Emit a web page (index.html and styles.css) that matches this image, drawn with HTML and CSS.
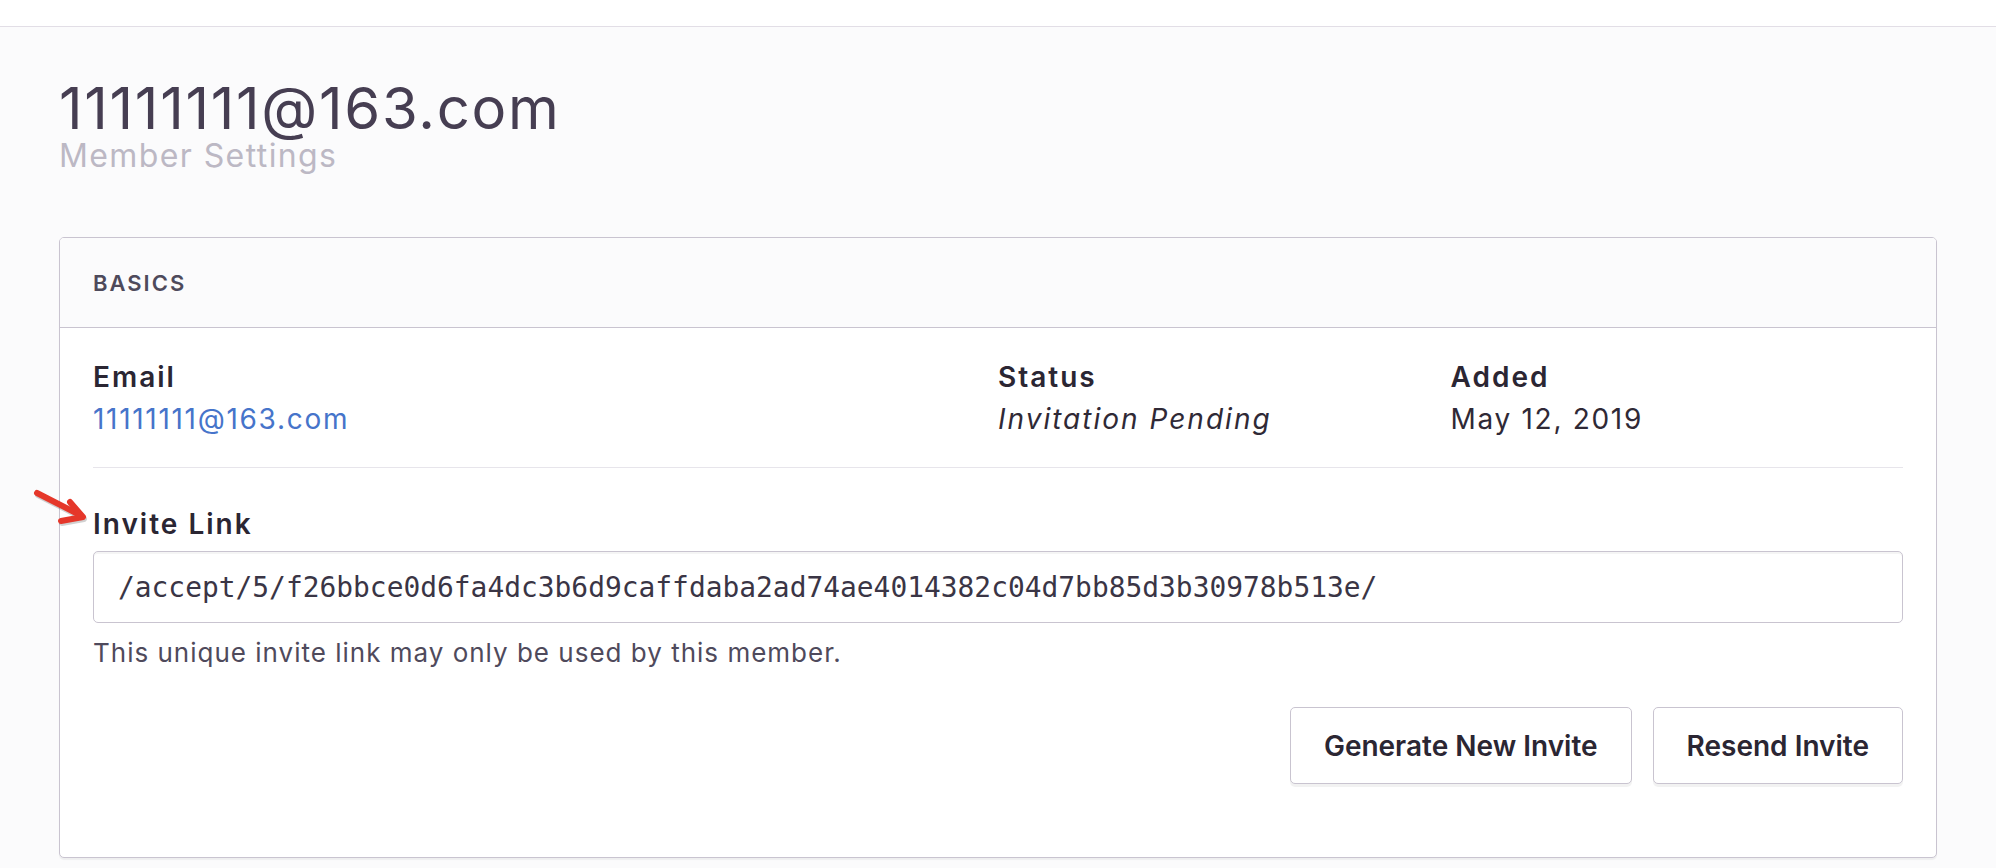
FILE: index.html
```html
<!DOCTYPE html>
<html lang="en">
<head>
<meta charset="utf-8">
<title>Member Settings</title>
<link rel="stylesheet" href="styles.css">
</head>
<body>
<div class="topbar"></div>
<main class="page">
  <div class="page-head">
    <h1 class="title">11111111@163.com</h1>
    <div class="subtitle">Member Settings</div>
  </div>
  <section class="panel">
    <div class="panel-header">BASICS</div>
    <div class="panel-body">
      <div class="info-grid">
        <div class="info">
          <div class="label">Email</div>
          <a class="value link" href="#">11111111@163.com</a>
        </div>
        <div class="info">
          <div class="label">Status</div>
          <div class="value italic">Invitation Pending</div>
        </div>
        <div class="info">
          <div class="label">Added</div>
          <div class="value">May 12, 2019</div>
        </div>
      </div>
      <div class="divider"></div>
      <div class="invite">
        <div class="label invite-label">Invite Link</div>
        <div class="link-box">/accept/5/f26bbce0d6fa4dc3b6d9caffdaba2ad74ae4014382c04d7bb85d3b30978b513e/</div>
        <div class="help">This unique invite link may only be used by this member.</div>
        <div class="actions">
          <button class="btn" type="button">Generate New Invite</button>
          <button class="btn" type="button">Resend Invite</button>
        </div>
      </div>
    </div>
  </section>
  <svg class="annot-arrow" width="70" height="50" viewBox="20 480 70 50" aria-hidden="true">
    <g fill="none" stroke="rgba(0,0,0,0.18)" stroke-width="6" stroke-linecap="round" stroke-linejoin="round" transform="translate(1,2)">
      <line x1="37" y1="494" x2="80" y2="516"/>
      <polyline points="70,503 83,518 61,522"/>
    </g>
    <g fill="none" stroke="#e5372a" stroke-width="6" stroke-linecap="round" stroke-linejoin="round">
      <line x1="37" y1="494" x2="80" y2="516"/>
      <polyline points="70,503 83,518 61,522"/>
    </g>
  </svg>
</main>
</body>
</html>
```
FILE: styles.css
```css
* { box-sizing: border-box; }
html, body { margin: 0; padding: 0; }
body {
  background: #fbfbfc;
  font-family: Inter, "Noto Sans", sans-serif;
  color: #2f2936;
  width: 1996px;
  height: 868px;
  overflow: hidden;
}
.topbar {
  height: 27px;
  background: #ffffff;
  border-bottom: 1px solid #e2dee6;
}
.page {
  position: relative;
  padding: 0 59px;
}
.page-head {
  padding-top: 52px;
}
.title {
  margin: 0;
  font-size: 58px;
  line-height: 58px;
  font-weight: 400;
  letter-spacing: 1.7px;
  color: #463e52;
}
.subtitle {
  margin-top: 3px;
  font-size: 32px;
  line-height: 32px;
  letter-spacing: 1.4px;
  color: #bcb8c4;
}
.panel {
  margin-top: 65px;
  width: 1878px;
  background: #ffffff;
  border: 1px solid #c9c4d0;
  border-radius: 5px;
  box-shadow: 0 2px 1px rgba(0,0,0,0.05);
  overflow: hidden;
}
.panel-header {
  height: 90px;
  display: flex;
  align-items: center;
  padding: 0 33px;
  background: #fbfbfc;
  border-bottom: 1px solid #c9c4d0;
  font-size: 22px;
  font-weight: 600;
  color: #4e4a5b;
  letter-spacing: 2px;
}
.panel-body {
  padding: 28px 33px 73px;
}
.info-grid {
  display: grid;
  grid-template-columns: 2fr 1fr 1fr;
}
.info { display: flex; flex-direction: column; align-items: flex-start; }
.label {
  font-size: 28px;
  line-height: 42px;
  font-weight: 600;
  letter-spacing: 2px;
  color: #2b2633;
}
.value {
  font-size: 28px;
  line-height: 42px;
  letter-spacing: 1.7px;
  color: #2f2936;
}
.link { color: #4674ca; text-decoration: none; }
.italic { font-style: italic; letter-spacing: 2px; }
.divider {
  margin-top: 27px;
  height: 1px;
  background: #e7e5eb;
}
.invite-label {
  margin-top: 35px;
}
.link-box {
  margin-top: 6px;
  height: 72px;
  display: flex;
  align-items: center;
  padding: 0 24px;
  background: #ffffff;
  border: 1px solid #c9c4d0;
  border-radius: 5px;
  box-shadow: inset 0 2px 0 rgba(0,0,0,0.04);
  font-family: "DejaVu Sans Mono", "Liberation Mono", monospace;
  font-size: 27.9px;
  color: #3a3545;
}
.help {
  margin-top: 12px;
  font-size: 26px;
  line-height: 36px;
  letter-spacing: 1px;
  color: #4f4a5c;
}
.actions {
  margin-top: 36px;
  display: flex;
  justify-content: flex-end;
  gap: 21px;
}
.btn {
  height: 77px;
  padding: 0 33px;
  background: #ffffff;
  border: 1px solid #c9c4d0;
  border-radius: 5px;
  box-shadow: 0 3px 0 rgba(0,0,0,0.05);
  font-family: Inter, "Noto Sans", sans-serif;
  font-size: 28px;
  font-weight: 600;
  color: #2b2633;
}
.annot-arrow {
  position: absolute;
  left: 20px;
  top: 452px;
}
```
